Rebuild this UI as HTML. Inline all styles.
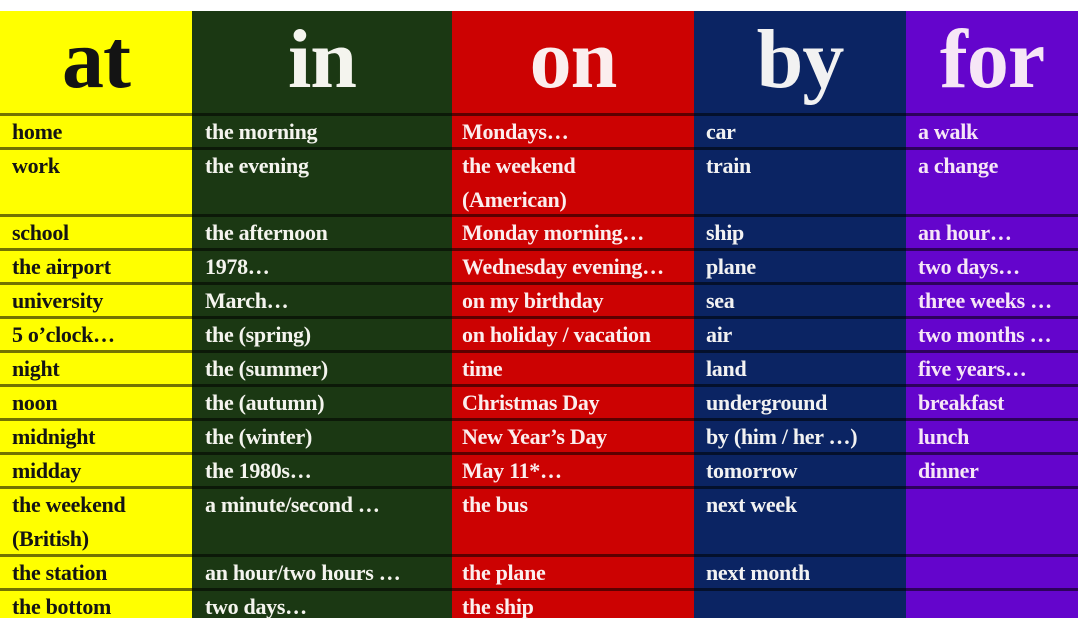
<!DOCTYPE html>
<html><head><meta charset="utf-8"><style>
*{margin:0;padding:0;box-sizing:border-box}
body{width:1078px;height:627px;background:#fff;overflow:hidden;position:relative;font-family:"Liberation Serif",serif}
.col{position:absolute;top:11px;height:607px}
.h{position:absolute;top:7px;left:0;right:0;text-align:center;font-size:84px;line-height:84px;font-weight:bold;letter-spacing:-1px}
.c{position:absolute;font-size:22px;line-height:34px;font-weight:bold;white-space:nowrap;letter-spacing:-0.3px}
.ln{position:absolute;left:0;width:1078px;height:3px;background:rgba(0,0,0,0.55)}
</style></head><body>
<div class="col" style="left:0;width:192px;background:#ffff00;color:#141414"><div class="h">at</div></div>
<div class="col" style="left:192px;width:260px;background:#1b3813;color:#f4f4ee"><div class="h">in</div></div>
<div class="col" style="left:452px;width:242px;background:#cc0202;color:#fbeeee"><div class="h">on</div></div>
<div class="col" style="left:694px;width:212px;background:#0b2463;color:#f2f2f2"><div class="h">by</div></div>
<div class="col" style="left:906px;width:172px;background:#6405cc;color:#f6e6f6"><div class="h">for</div></div>
<div id="lines"></div>
<div id="txt"></div>
<script>
var tops=[114,148,215,249,283,317,351,385,419,453,487,555,589];
var L=document.getElementById('lines'),h='';
tops.forEach(function(t){h+='<div class="ln" style="top:'+(t-1)+'px"></div>';});
L.innerHTML=h;
var xs=[12,205,462,706,918];
var cols=['#141414','#f4f4ee','#fbeeee','#f2f2f2','#f6e6f6'];
var d=[
["home","the morning","Mondays…","car","a walk"],
["work","the evening","the weekend<br>(American)","train","a change"],
["school","the afternoon","Monday morning…","ship","an hour…"],
["the airport","1978…","Wednesday evening…","plane","two days…"],
["university","March…","on my birthday","sea","three weeks …"],
["5 o’clock…","the (spring)","on holiday / vacation","air","two months …"],
["night","the (summer)","time","land","five years…"],
["noon","the (autumn)","Christmas Day","underground","breakfast"],
["midnight","the (winter)","New Year’s Day","by (him / her …)","lunch"],
["midday","the 1980s…","May 11*…","tomorrow","dinner"],
["the weekend<br>(British)","a minute/second …","the bus","next week",""],
["the station","an hour/two hours …","the plane","next month",""],
["the bottom","two days…","the ship","",""]];
var s='';
d.forEach(function(r,i){r.forEach(function(t,j){if(t)s+='<div class="c" style="left:'+xs[j]+'px;top:'+(tops[i]+1)+'px;color:'+cols[j]+'">'+t+'</div>';});});
document.getElementById('txt').innerHTML=s;
</script>
</body></html>
